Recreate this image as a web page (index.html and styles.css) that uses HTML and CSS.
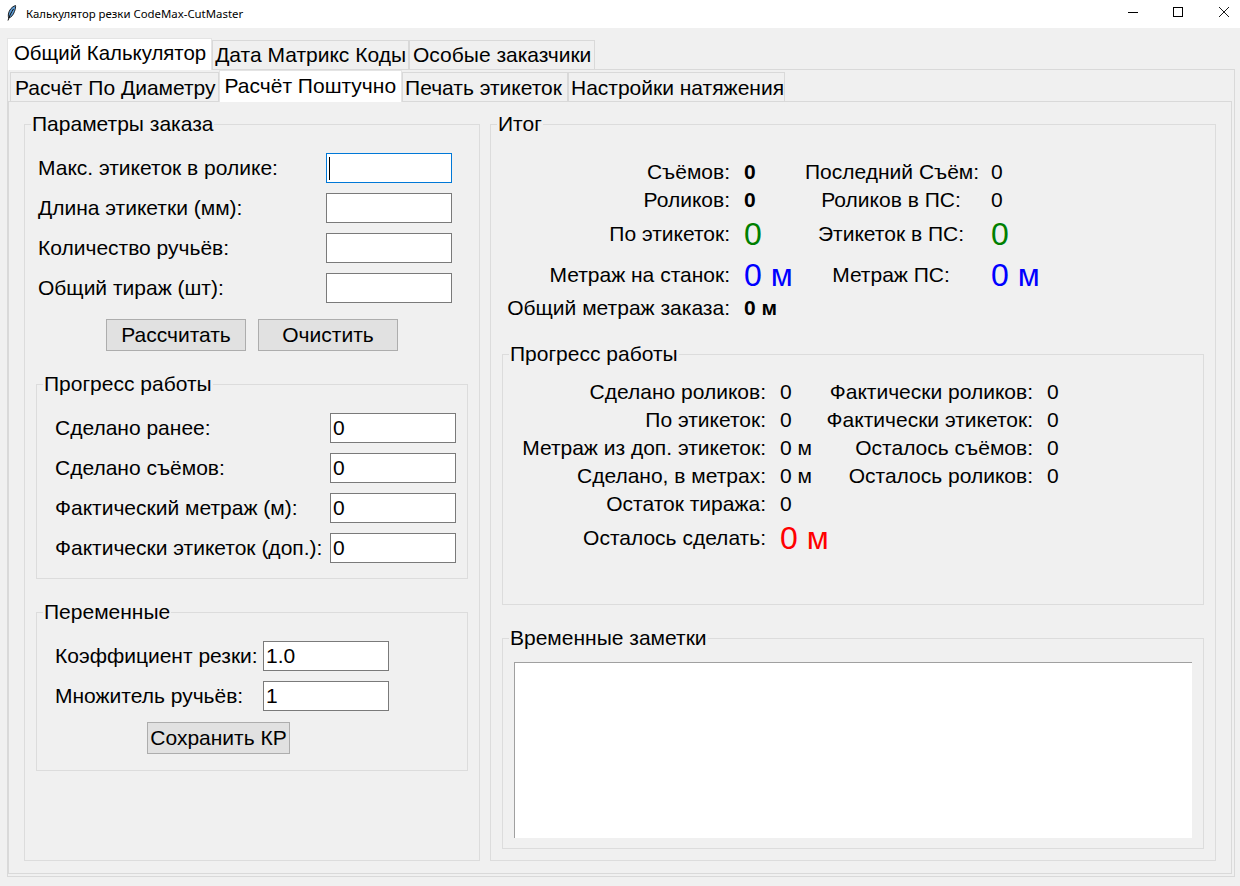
FILE: index.html
```html
<!DOCTYPE html>
<html lang="ru">

<head>
    <meta charset="UTF-8">
    <meta name="viewport" content="width=device-width, initial-scale=1.0">
    <link rel="stylesheet" href="styles.css">
    <title>Калькулятор резки CodeMax-CutMaster</title>
</head>

<body>
    <header class="titlebar">
        <svg class="app-icon" width="12" height="16" viewBox="0 0 12 16">
            <path d="M9.5 .5C6 1.5 3 5 2.4 9 2.2 10.8 2.3 12 2.8 13 5 12.5 7.3 10 8.5 6.5 9.4 4 9.8 2 9.5 .5Z" fill="#5b9bd5" stroke="#111" stroke-width=".9" />
            <path d="M7.5 4C5.5 7 3.5 10.5 2 15.5" fill="none" stroke="#111" stroke-width="1" />
        </svg>
        <span class="title-text">Калькулятор резки CodeMax-CutMaster</span>
        <div class="window-btns">
            <svg width="10" height="10" viewBox="0 0 10 10"><path d="M0 5.5H10" stroke="#000" /></svg>
            <svg width="10" height="10" viewBox="0 0 10 10"><rect x=".5" y=".5" width="9" height="9" fill="none" stroke="#000" /></svg>
            <svg class="btn-close" width="10" height="10" viewBox="0 0 10 10"><path d="M0 0L10 10M10 0L0 10" stroke="#000" stroke-width=".9" /></svg>
        </div>
    </header>

    <div class="app">
        <nav class="tabs tabs-outer">
            <div class="tab tab-active">Общий Калькулятор</div>
            <div class="tab">Дата Матрикс Коды</div>
            <div class="tab">Особые заказчики</div>
        </nav>
        <div class="notebook">
            <nav class="tabs tabs-inner">
                <div class="tab">Расчёт По Диаметру</div>
                <div class="tab tab-active">Расчёт Поштучно</div>
                <div class="tab">Печать этикеток</div>
                <div class="tab">Настройки натяжения</div>
            </nav>
            <main class="page">
                <div class="col-left">
                    <fieldset class="group group-main">
                        <legend>Параметры заказа</legend>
                        <div class="form form-params">
                            <label>Макс. этикеток в ролике:</label>
                            <div class="entry-wrap">
                                <input class="entry entry-focus" type="text">
                                <span class="caret"></span>
                            </div>
                            <label>Длина этикетки (мм):</label>
                            <input class="entry" type="text">
                            <label>Количество ручьёв:</label>
                            <input class="entry" type="text">
                            <label>Общий тираж (шт):</label>
                            <input class="entry" type="text">
                        </div>
                        <div class="btn-row">
                            <button class="btn btn-wide" type="button">Рассчитать</button>
                            <button class="btn btn-wide" type="button">Очистить</button>
                        </div>

                        <fieldset class="group group-sub">
                            <legend>Прогресс работы</legend>
                            <div class="form form-progress">
                                <label>Сделано ранее:</label>
                                <input class="entry" type="text" value="0">
                                <label>Сделано съёмов:</label>
                                <input class="entry" type="text" value="0">
                                <label>Фактический метраж (м):</label>
                                <input class="entry" type="text" value="0">
                                <label>Фактически этикеток (доп.):</label>
                                <input class="entry" type="text" value="0">
                            </div>
                        </fieldset>

                        <fieldset class="group group-sub group-vars">
                            <legend>Переменные</legend>
                            <div class="form form-vars">
                                <label>Коэффициент резки:</label>
                                <input class="entry" type="text" value="1.0">
                                <label>Множитель ручьёв:</label>
                                <input class="entry" type="text" value="1">
                            </div>
                            <button class="btn btn-save" type="button">Сохранить КР</button>
                        </fieldset>
                    </fieldset>
                </div>

                <fieldset class="group group-main group-result">
                    <legend>Итог</legend>
                    <div class="summary">
                        <span class="key">Съёмов:</span>
                        <span class="val bold">0</span>
                        <span class="key-mid">Последний Съём:</span>
                        <span class="val">0</span>

                        <span class="key">Роликов:</span>
                        <span class="val bold">0</span>
                        <span class="key-mid">Роликов в ПС:</span>
                        <span class="val">0</span>

                        <span class="key">По этикеток:</span>
                        <span class="val big green">0</span>
                        <span class="key-mid">Этикеток в ПС:</span>
                        <span class="val big green">0</span>

                        <span class="key">Метраж на станок:</span>
                        <span class="val big blue">0 м</span>
                        <span class="key-mid">Метраж ПС:</span>
                        <span class="val big blue">0 м</span>

                        <span class="key">Общий метраж заказа:</span>
                        <span class="val bold">0 м</span>
                    </div>

                    <fieldset class="group group-sub group-work">
                        <legend>Прогресс работы</legend>
                        <div class="work">
                            <span class="key">Сделано роликов:</span>
                            <span class="val">0</span>
                            <span class="key">Фактически роликов:</span>
                            <span class="val">0</span>

                            <span class="key">По этикеток:</span>
                            <span class="val">0</span>
                            <span class="key">Фактически этикеток:</span>
                            <span class="val">0</span>

                            <span class="key">Метраж из доп. этикеток:</span>
                            <span class="val">0 м</span>
                            <span class="key">Осталось съёмов:</span>
                            <span class="val">0</span>

                            <span class="key">Сделано, в метрах:</span>
                            <span class="val">0 м</span>
                            <span class="key">Осталось роликов:</span>
                            <span class="val">0</span>

                            <span class="key">Остаток тиража:</span>
                            <span class="val">0</span>
                            <span></span>
                            <span></span>

                            <span class="key">Осталось сделать:</span>
                            <span class="val big red">0 м</span>
                        </div>
                    </fieldset>

                    <fieldset class="group group-sub group-notes">
                        <legend>Временные заметки</legend>
                        <textarea class="notes"></textarea>
                    </fieldset>
                </fieldset>
            </main>
        </div>
    </div>
</body>

</html>
```

FILE: styles.css
```css
* {
    box-sizing: border-box;
    margin: 0;
    padding: 0;
}

body {
    display: flex;
    flex-direction: column;
    width: 1240px;
    height: 886px;
    overflow: hidden;
    background-color: #f0f0f0;
    color: #000;
    font-family: "Liberation Sans", Arial, sans-serif;
    font-size: 21px;
}

/* title bar */
.titlebar {
    display: flex;
    flex: none;
    align-items: center;
    height: 28px;
    padding: 0 0 2px 6px;
    background-color: #fff;
}

.app-icon {
    margin-right: 8px;
}

.title-text {
    font-family: "Noto Sans", sans-serif;
    font-size: 11.4px;
}

.window-btns {
    display: flex;
    gap: 35px;
    margin-left: auto;
    margin-right: 11px;
    padding-bottom: 2px;
}

.btn-close {
    margin-left: 1px;
}

/* notebooks */
.app {
    display: flex;
    flex: 1;
    flex-direction: column;
    min-height: 0;
    padding: 10px 5px 9px 7px;
}

.tabs {
    display: flex;
    align-items: flex-end;
    position: relative;
    z-index: 1;
}

.tab {
    height: 29px;
    border: 1px solid #d9d9d9;
    border-bottom: none;
    line-height: 27px;
    white-space: nowrap;
}

.tab-active {
    background-color: #fff;
    border-color: #e4e4e4;
    line-height: 29px;
}

.tabs-outer .tab {
    padding: 0 2px;
}

.tabs-outer .tab:last-child {
    padding: 0 3px;
}

.tabs-outer .tab-active {
    height: 32px;
    margin-bottom: -1px;
    padding: 0 5px 0 6px;
    font-size: 20.4px;
}

.tabs-inner {
    padding-left: 2px;
}

.tabs-inner .tab {
    padding: 0 2px 0 4px;
    line-height: 29px;
}

.tabs-inner .tab:nth-child(3) {
    padding: 0 5px 0 2px;
}

.tabs-inner .tab:nth-child(4) {
    padding: 0 0 0 2px;
}

.tabs-inner .tab-active {
    height: 32px;
    margin-bottom: -1px;
    padding: 0 5px;
    line-height: 30px;
}

.notebook {
    display: flex;
    flex: 1;
    flex-direction: column;
    min-height: 0;
    padding: 0 2px 2px 0;
    border: 1px solid #d9d9d9;
}

.page {
    display: grid;
    flex: 1;
    grid-template-columns: 456px 726px;
    gap: 10px;
    min-height: 0;
    padding: 11px 15px 12px 15px;
    border: 1px solid #d9d9d9;
}

/* groups */
.group {
    min-width: 0;
    border: 1px solid #dcdcdc;
}

.group legend {
    height: 23px;
    margin-left: 6px;
    padding: 0 1px;
    line-height: 21px;
}

.group-main {
    height: 100%;
    padding: 17px 11px 11px;
}

.group-main > legend,
.group-notes > legend {
    margin-left: -5px;
}

.col-left {
    display: flex;
}

.col-left .group-main {
    width: 100%;
}

.group-sub {
    margin-top: 22px;
}

/* forms */
.form {
    display: grid;
    align-items: center;
    row-gap: 10px;
}

.form-params {
    grid-template-columns: 288px 126px;
    padding-left: 2px;
}

.form-progress {
    grid-template-columns: 275px 126px;
    padding: 17px 0 15px 18px;
}

.form-vars {
    grid-template-columns: 208px 126px;
    padding: 17px 0 0 18px;
}

.entry-wrap {
    position: relative;
    height: 30px;
}

.entry {
    display: block;
    width: 126px;
    height: 30px;
    padding: 0 2px;
    border: 1px solid #7a7a7a;
    background-color: #fff;
    color: #000;
    font-family: inherit;
    font-size: 21px;
    outline: none;
}

.entry-focus {
    border-color: #0078d7;
}

.caret {
    position: absolute;
    top: 4px;
    left: 3px;
    width: 1px;
    height: 23px;
    background-color: #000;
}

.btn {
    height: 32px;
    border: 1px solid #adadad;
    background-color: #e1e1e1;
    color: #000;
    font-family: inherit;
    font-size: 21px;
}

.btn-row {
    display: flex;
    gap: 12px;
    margin: 16px 0 0 70px;
}

.btn-wide {
    width: 140px;
}

.btn-save {
    display: block;
    width: 143px;
    margin: 11px 0 16px 110px;
}

/* result labels */
.key {
    text-align: right;
    white-space: nowrap;
}

.key-mid {
    text-align: center;
    white-space: nowrap;
}

.val {
    margin-left: -1px;
    white-space: nowrap;
}

.bold {
    font-weight: bold;
}

.big {
    font-size: 32px;
}

.green {
    color: #008000;
}

.blue {
    color: #00f;
}

.red {
    color: #f00;
}

.summary,
.work {
    display: grid;
    align-items: center;
    column-gap: 15px;
}

.summary {
    grid-template-columns: 228px 45px 172px 100px;
    grid-template-rows: 28px 28px 40px 42px 24px;
    margin-top: 5px;
}

.group-work {
    margin-top: 23px;
}

.work {
    grid-template-columns: 252px 29px 208px 100px;
    grid-template-rows: repeat(5, 28px) 40px;
    padding: 12px 0 46px 11px;
}

.group-notes {
    padding: 12px 11px 10px;
}

.notes {
    display: block;
    width: 678px;
    height: 176px;
    border: none;
    border-top: 1px solid #a0a0a0;
    border-left: 1px solid #a0a0a0;
    background-color: #fff;
    outline: none;
    resize: none;
}
```
